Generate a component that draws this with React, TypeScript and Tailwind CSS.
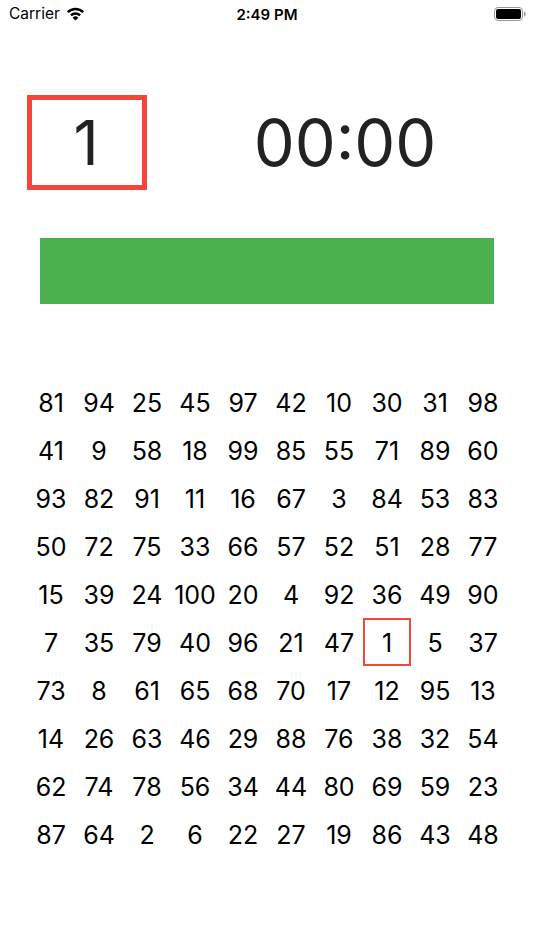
import React from "react";

const rows: number[][] = [
  [81, 94, 25, 45, 97, 42, 10, 30, 31, 98],
  [41, 9, 58, 18, 99, 85, 55, 71, 89, 60],
  [93, 82, 91, 11, 16, 67, 3, 84, 53, 83],
  [50, 72, 75, 33, 66, 57, 52, 51, 28, 77],
  [15, 39, 24, 100, 20, 4, 92, 36, 49, 90],
  [7, 35, 79, 40, 96, 21, 47, 1, 5, 37],
  [73, 8, 61, 65, 68, 70, 17, 12, 95, 13],
  [14, 26, 63, 46, 29, 88, 76, 38, 32, 54],
  [62, 74, 78, 56, 34, 44, 80, 69, 59, 23],
  [87, 64, 2, 6, 22, 27, 19, 86, 43, 48],
];

function Wifi() {
  return (
    <svg width="19" height="14" viewBox="0 0 19 14" className="ml-[6px]">
      <path d="M1.8 5.2A10.9 10.9 0 0 1 17.2 5.2" fill="none" stroke="#000" strokeWidth="2.4" />
      <path d="M4.9 8.4A6.5 6.5 0 0 1 14.1 8.4" fill="none" stroke="#000" strokeWidth="2.4" />
      <path d="M9.5 13.6L6.6 10.7A4.1 4.1 0 0 1 12.4 10.7Z" fill="#000" />
    </svg>
  );
}

function Battery() {
  return (
    <svg width="33" height="14" viewBox="0 0 33 14">
      <rect x="0.5" y="0.5" width="28" height="13" rx="3.5" fill="none" stroke="#999" />
      <rect x="2" y="2" width="25" height="10" rx="2" fill="#000" />
      <path d="M30 4.5v5c1-.3 1.8-1.3 1.8-2.5S31 4.8 30 4.5z" fill="#999" />
    </svg>
  );
}

export default function App() {
  return (
    <div className="w-[534px] h-[950px] bg-white text-black" style={{ fontFamily: "Inter, 'Liberation Sans', sans-serif" }}>
      <div className="relative h-[28px] flex items-center px-[9px]">
        <span className="text-[15.5px] leading-none">Carrier</span>
        <Wifi />
        <span className="absolute left-0 right-0 text-center text-[15px] font-semibold leading-none pointer-events-none">2:49 PM</span>
        <div className="ml-auto mr-[-2px]">
          <Battery />
        </div>
      </div>
      <div className="flex items-center mt-[67px] pl-[27px]">
        <div className="w-[120px] h-[95px] border-[5px] border-[#f4473b] flex items-center justify-center pr-[2px] text-[62px] leading-none text-[#222]">
          1
        </div>
        <div className="flex-1 flex justify-center pl-[36px] pr-[27px] text-[65px] leading-none text-[#222]">
          00:00
        </div>
      </div>
      <div className="mx-[40px] mt-[48px] h-[66px] bg-[#4caf50]" />
      <div className="mt-[74px] px-[27px] grid grid-cols-10">
        {rows.flat().map((n, i) => (
          <div
            key={i}
            className={
              n === 1
                ? "h-[48px] flex items-center justify-center pt-[4px] text-[25px] border-2 border-[#f4473b]"
                : "h-[48px] flex items-center justify-center pt-[4px] text-[25px]"
            }
          >
            {n}
          </div>
        ))}
      </div>
    </div>
  );
}
